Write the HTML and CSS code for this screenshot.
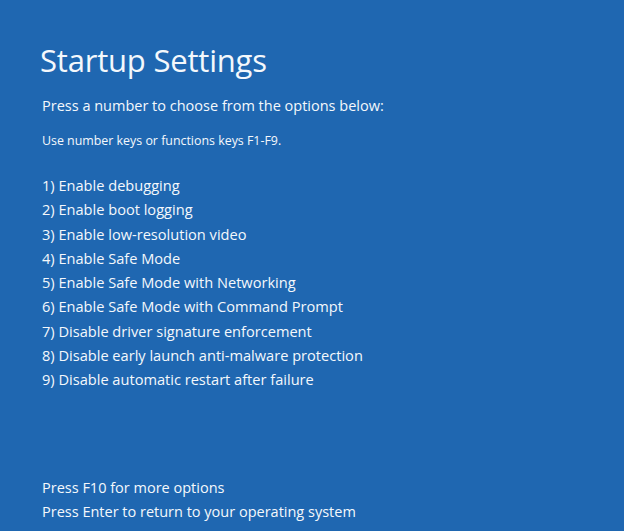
FILE: index.html
```html
<!doctype html>
<html>
<head>
  <meta charset="utf-8" />
  <title>Startup Settings</title>
  <link rel="stylesheet" href="styles.css">
</head>

<body>
  <div class="screen">
    <h1>Startup Settings</h1>
    <p class="lead">Press a number to choose from the options below:</p>
    <p class="hint">Use number keys or functions keys F1-F9.</p>
    <ul class="options">
      <li>1) Enable debugging</li>
      <li>2) Enable boot logging</li>
      <li>3) Enable low-resolution video</li>
      <li>4) Enable Safe Mode</li>
      <li>5) Enable Safe Mode with Networking</li>
      <li>6) Enable Safe Mode with Command Prompt</li>
      <li>7) Disable driver signature enforcement</li>
      <li>8) Disable early launch anti-malware protection</li>
      <li>9) Disable automatic restart after failure</li>
    </ul>
    <div class="footer">
      <p>Press F10 for more options</p>
      <p>Press Enter to return to your operating system</p>
    </div>
  </div>
</body>
</html>
```

FILE: styles.css
```css
html, body {
  margin: 0;
  height: 100%;
}
body {
  background: #1f67b1;
  color: #f4f8fc;
  font-family: "Open Sans", "Noto Sans", sans-serif;
}
.screen {
  display: flex;
  flex-direction: column;
  height: 100%;
  box-sizing: border-box;
  padding: 38px 0 7px 42px;
}
h1 {
  margin: 0 0 0 -2px;
  font-size: 31px;
  font-weight: 400;
  line-height: 44px;
  letter-spacing: -0.2px;
}
.lead {
  margin: 14px 0 0;
  font-size: 14.5px;
  line-height: 20px;
}
.hint {
  margin: 17px 0 0;
  font-size: 12.4px;
  line-height: 16px;
}
.options {
  list-style: none;
  margin: 24px 0 0;
  padding: 0;
  font-size: 14.6px;
  line-height: 24.3px;
}
.footer {
  margin-top: auto;
  font-size: 14.5px;
  line-height: 24px;
}
.footer p {
  margin: 0;
}
```
